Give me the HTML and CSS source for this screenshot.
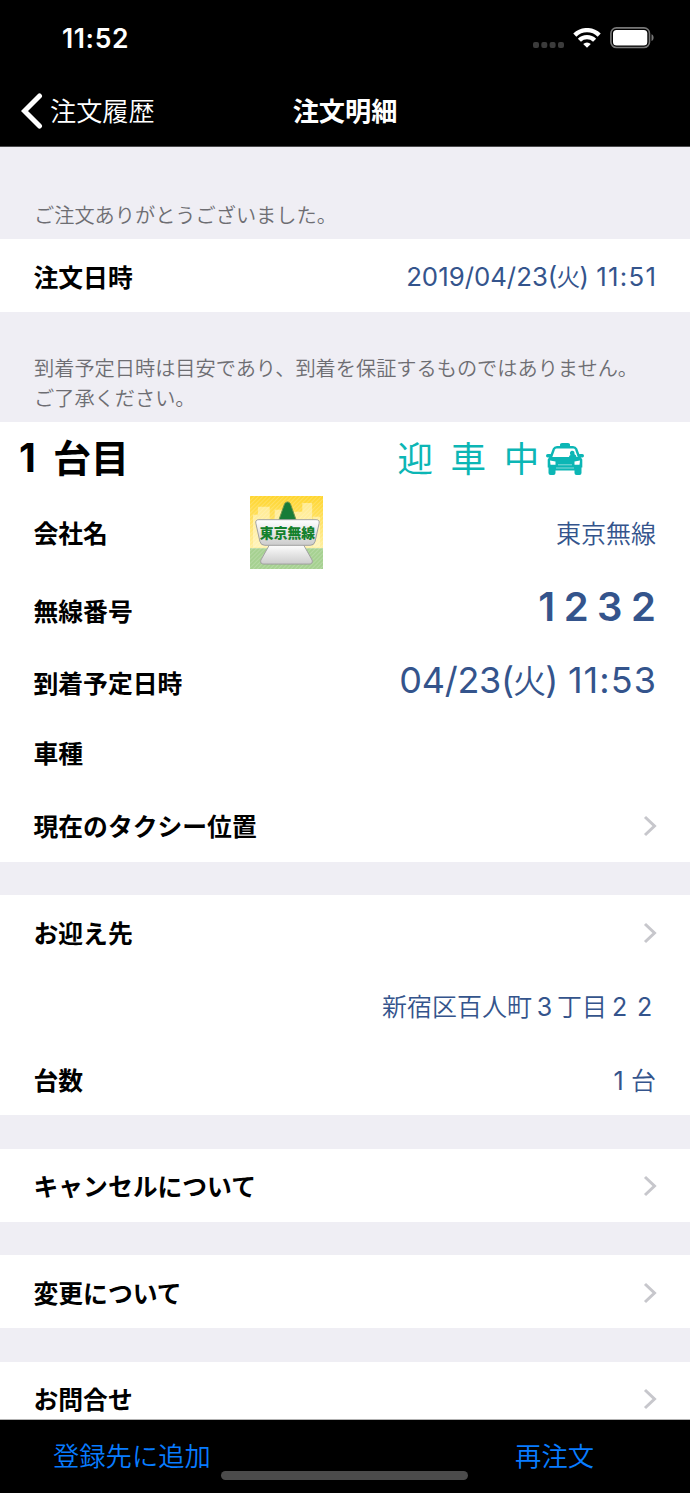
FILE: index.html
```
<!DOCTYPE html>
<html lang="ja">
<head>
<meta charset="utf-8">
<title>注文明細</title>
<link rel="stylesheet" href="styles.css">
</head>
<body>
<div class="screen">
  <header class="top">
    <div class="status">
      <span class="clock">11:52</span>
      <div class="indicators">
        <svg class="dots" width="31" height="6" viewBox="0 0 31 6"><g fill="#3b3b3b"><rect width="6" height="6" rx="2"/><rect x="8.3" width="6" height="6" rx="2"/><rect x="16.6" width="6" height="6" rx="2"/><rect x="25" width="6" height="6" rx="2"/></g></svg>
        <svg class="wifi" width="28" height="20" viewBox="0 0 28 20"><g fill="none" stroke="#fff" stroke-width="4.4"><path d="M1.8 7.1a17.5 17.5 0 0 1 24.4 0"/><path d="M6.4 12.300a10.8 10.8 0 0 1 15.200 0"/></g><path d="M10.2 16a5.5 5.5 0 0 1 7.6 0L14 19.8z" fill="#fff"/></svg>
        <svg class="battery" width="44" height="22" viewBox="0 0 44 22"><rect x=".9" y=".9" width="38.6" height="19.6" rx="5.5" fill="none" stroke="#777" stroke-width="1.6"/><rect x="3" y="3" width="34.3" height="15.4" rx="3.5" fill="#fff"/><path d="M41.5 7.3c2.8 1 2.8 5.8 0 6.8z" fill="#777"/></svg>
      </div>
    </div>
    <nav class="nav">
      <a class="back"><svg width="22" height="36" viewBox="0 0 22 36"><path d="M18.5 3 3.5 18l15 15" fill="none" stroke="#fff" stroke-width="5" stroke-linecap="round"/></svg><span>注文履歴</span></a>
      <h1 class="title">注文明細</h1>
    </nav>
  </header>

  <main class="list">
    <p class="note note-first">ご注文ありがとうございました。</p>
    <section class="group">
      <div class="row"><span class="label">注文日時</span><span class="value date">2019/04/23(<span class="day">火</span>) <span class="time">11:51</span></span></div>
    </section>
    <p class="note note-second">到着予定日時は目安であり、到着を保証するものではありません。<br>ご了承ください。</p>

    <section class="group">
      <div class="row car">
        <h2 class="car-no"><span class="one">1</span>台目</h2>
        <div class="state"><span class="state-text">迎車中</span>
          <svg width="40" height="34" viewBox="0 0 40 34"><g fill="#0cb6b5"><path d="M15 4V2.500Q15 1 17 1h6q2 0 2 1.500V4h3q3 0 4.200 2.600L35 14l2.300 3.500v8H2.700v-8L5 14l2.800-7.400Q9 4 12 4z"/><rect x="1" y="12" width="6" height="3.500" rx="1.700"/><rect x="33" y="12" width="6" height="3.500" rx="1.700"/><path d="M3.500 25h7v6q0 2-2 2h-3q-2 0-2-2zM29.500 25h7v6q0 2-2 2h-3q-2 0-2-2z"/><path d="M9 24h22v4.500H9z"/></g><path d="M11.500 6.500h17q1 0 1.500 1l2.700 7.500H7.300L10 7.500q.5-1 1.500-1z" fill="#fff"/><path d="M24 15q0-1.500 1.500-2c-2.500-5 5-6 4-.800q1.800.800 2 2.800z" fill="#0cb6b5"/><path d="M5 18.500l5.500 1v3.300h-5zM35 18.500l-5.500 1v3.300h5z" fill="#fff"/><path d="M13 22.800h14M11 26h18" stroke="#a9e5e4" stroke-width=".8"/></svg>
        </div>
      </div>
      <div class="row company">
        <span class="label">会社名</span>
        <svg class="logo" width="73" height="73" viewBox="0 0 74 74">
          <defs>
            <linearGradient id="sky" x2="0" y2="1"><stop stop-color="#ffd52e"/><stop offset="1" stop-color="#ffefa0"/></linearGradient>
            <linearGradient id="plate" x2="0" y2="1"><stop stop-color="#fff"/><stop offset="1" stop-color="#ccc"/></linearGradient>
            <pattern id="lines" width="3" height="3" patternUnits="userSpaceOnUse" patternTransform="rotate(45)"><path d="M0 0v3" stroke="#fff" stroke-opacity=".3" stroke-width="1.200"/></pattern>
          </defs>
          <path d="M0 0h74v53H0z" fill="url(#sky)"/>
          <path d="M3 52V19h5v-8h12v15h5V14h8v38zM44 52V16h9V7h10v45zM64 52V21h7v31z" fill="#fff6c9" opacity=".6"/>
          <path d="M0 53h74v21H0z" fill="#a6d191"/>
          <path d="M0 0h74v74H0z" fill="url(#lines)"/>
          <path d="M38 6q2 0 3 2l6 17H29l6-17q1-2 3-2z" fill="#187c38" stroke="#70944c"/>
          <path d="M20 49h34l9 16q1 4-3 4H14q-4 0-3-4z" fill="url(#plate)" stroke="#a0a0a0"/>
          <path d="M9 24h58q4 0 3 4l-4 18q-1 4-5 4H15q-4 0-5-4L6 28q-1-4 3-4z" fill="url(#plate)" stroke="#a0a0a0"/>
          <text class="logo-text" x="38" y="43" text-anchor="middle" textLength="56">東京無線</text>
        </svg>
        <span class="value">東京無線</span>
      </div>
      <div class="row radio"><span class="label">無線番号</span><span class="value number">1232</span></div>
      <div class="row arrival"><span class="label">到着予定日時</span><span class="value eta">04/23(<span class="day">火</span>) <span class="time">11:53</span></span></div>
      <div class="row"><span class="label">車種</span></div>
      <div class="row"><span class="label">現在のタクシー位置</span><svg class="chevron" viewBox="0 0 14 22"><path d="M2 2l9.500 9L2 20"/></svg></div>
    </section>

    <section class="group">
      <div class="row"><span class="label">お迎え先</span><svg class="chevron" viewBox="0 0 14 22"><path d="M2 2l9.500 9L2 20"/></svg></div>
      <div class="row"><span class="value address">新宿区百人町<span class="digit">3</span>丁目<span class="digit">2</span><span class="digit">2</span></span></div>
      <div class="row"><span class="label">台数</span><span class="value"><span class="digit">1</span>台</span></div>
    </section>

    <section class="group">
      <div class="row"><span class="label">キャンセルについて</span><svg class="chevron" viewBox="0 0 14 22"><path d="M2 2l9.500 9L2 20"/></svg></div>
    </section>
    <section class="group">
      <div class="row"><span class="label">変更について</span><svg class="chevron" viewBox="0 0 14 22"><path d="M2 2l9.500 9L2 20"/></svg></div>
    </section>
    <section class="group">
      <div class="row"><span class="label">お問合せ</span><svg class="chevron" viewBox="0 0 14 22"><path d="M2 2l9.500 9L2 20"/></svg></div>
    </section>
  </main>

  <footer class="toolbar"><a>登録先に追加</a><a>再注文</a><span class="home"></span></footer>
</div>
</body>
</html>
```
FILE: styles.css
```
* { box-sizing: border-box; }
body { margin: 0; font-family: Inter, "Noto Sans CJK JP", sans-serif; color: #000; background: #000; }
h1, h2, p { margin: 0; }
svg { display: block; flex: none; }
.screen { width: 690px; height: 1493px; display: flex; flex-direction: column; overflow: hidden; }

.top { height: 147px; flex: none; background: #000; color: #fff; border-bottom: 1px solid #4a4a4c; }
.status { height: 75px; padding: 0 36px 0 62px; display: flex; justify-content: space-between; align-items: center; }
.clock { font-size: 26.5px; font-weight: 600; letter-spacing: .6px; }
.indicators { display: flex; gap: 9px; align-items: center; }
.dots { margin-top: 14px; }
.nav { height: 71px; display: grid; grid-template-columns: 1fr auto 1fr; align-items: center; padding: 0 21px; }
.back { display: flex; align-items: center; gap: 7px; font-size: 26.2px; font-weight: 350; line-height: 36px; }
.title { font-size: 26.2px; font-weight: 700; line-height: 36px; }
.back span, .title { padding-top: 2px; }

.list { height: 1272px; flex: none; overflow: hidden; background: #efeef4; }
.note { padding-left: 34px; font-size: 20.2px; font-weight: 350; line-height: 29.5px; color: #6d6d72; white-space: nowrap; }
.note-first { height: 92px; padding-top: 54px; }
.note-second { height: 110px; padding-top: 42px; }
.group { background: #fff; }
.group + .group { margin-top: 33.3px; }
.row { height: 73.3px; padding: 2px 34px 0 33.5px; display: flex; justify-content: space-between; align-items: center; }
.label { font-size: 24.8px; font-weight: 700; line-height: 36px; padding-top: 2px; white-space: nowrap; }
.value { font-size: 25px; font-weight: 350; line-height: 36px; padding-top: 2px; color: #34548c; margin-left: auto; white-space: nowrap; }
.date { font-size: 25.8px; font-weight: 400; }
.day { font-size: .92em; font-weight: 350; letter-spacing: -.03em; margin-left: -.03em; }
.time { letter-spacing: .05em; margin-right: -.05em; }
.address { margin-right: -1px; }
.digit { display: inline-block; width: 25px; text-align: center; font-weight: 400; }
.chevron { width: 14px; height: 22px; margin-right: -1px; fill: none; stroke: #c7c7cc; stroke-width: 3; }

.row.car { padding: 0 105px 0 19px; }
.car-no { display: flex; gap: 14px; margin-top: -2px; font-size: 38px; line-height: 54px; font-weight: 700; }
.one { font-size: 39px; width: 20px; }
.state { display: flex; align-items: center; color: #0cb6b5; font-size: 35.5px; font-weight: 400; }
.state-text { letter-spacing: 17.7px; margin-right: -12px; padding-top: 2px; line-height: 54px; }
.row.company { display: grid; grid-template-columns: 216.5px 73px 1fr; padding-top: 0; }
.company .label, .company .value { padding-top: 4px; }
.company .value { justify-self: end; }
.logo-text { font: 900 14px "Noto Sans CJK JP", sans-serif; fill: #14812c; }
.row.radio, .row.arrival { align-items: baseline; }
.value.number { padding-top: 0; font-size: 40px; font-weight: 600; letter-spacing: 8.5px; margin-right: -8.5px; line-height: 71px; }
.value.eta { padding-top: 0; font-size: 36px; font-weight: 400; line-height: 72px; }
.eta .time { letter-spacing: .03em; margin-right: -.03em; }
.eta { letter-spacing: -.25px; }

.toolbar { position: relative; flex: 1; display: flex; justify-content: space-between; padding: 19px 96px 0 53px; border-top: 1px solid #b2b2b2; background: #000; color: #087cff; font-size: 26.3px; font-weight: 350; line-height: 36px; }
.home { position: absolute; left: 221px; top: 51px; width: 247px; height: 9px; border-radius: 5px; background: #4b4b4b; }
```
